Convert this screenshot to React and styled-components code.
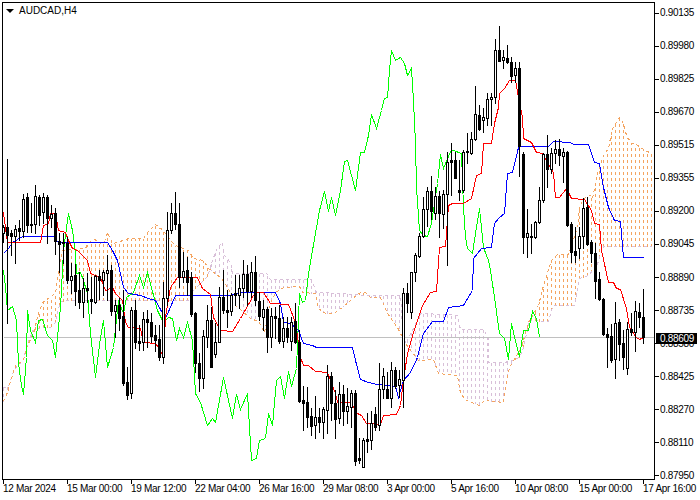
import styled, { createGlobalStyle } from "styled-components";

const GlobalStyle = createGlobalStyle`
  html, body {
    margin: 0;
    padding: 0;
    background: #fff;
  }
`;

// hi, lo, body top, body bottom, 1 = bear (filled)
const CANDLES = [
  [225,242,227,233,0],[159,323,227,235,1],[230,255,233,236,1],[225,263,229,236,0],[220,240,228,231,1],
  [194,237,199,231,0],[193,232,197,225,1],[203,232,224,225,1],[185,233,196,224,0],[195,225,197,215,1],
  [193,223,197,212,0],[195,243,197,218,1],[205,227,214,218,0],[208,254,213,241,1],[233,272,241,244,1],
  [233,263,242,243,1],[237,283,243,280,1],[263,293,276,280,0],[264,305,275,291,1],[272,308,290,302,1],
  [278,317,288,302,0],[273,302,288,290,1],[277,313,299,301,1],[275,303,276,302,0],[270,299,276,280,1],
  [270,295,272,280,0],[255,300,270,273,0],[265,315,270,311,1],[300,337,305,311,0],[298,330,305,318,1],
  [290,385,316,383,1],[367,399,382,395,1],[307,398,310,393,0],[300,348,310,342,1],[325,350,341,343,1],
  [312,350,319,342,0],[310,347,319,322,1],[313,342,322,336,1],[325,351,335,340,1],[325,360,339,357,1],
  [282,363,298,357,0],[212,305,230,298,0],[203,233,213,230,0],[192,229,213,224,1],[203,287,224,277,1],
  [252,282,271,277,0],[257,295,270,282,1],[272,316,277,314,1],[312,372,313,363,1],[353,391,363,378,1],
  [330,388,336,378,0],[305,347,320,337,0],[307,367,320,367,1],[323,357,342,354,0],[287,342,297,342,0],
  [270,313,297,310,1],[290,327,310,312,1],[293,315,295,311,0],[275,305,293,295,1],[275,308,288,295,0],
  [260,297,274,288,0],[265,305,274,291,1],[262,297,272,291,0],[256,305,272,300,1],[292,320,301,316,1],
  [300,330,309,317,0],[307,352,309,337,1],[308,347,316,337,0],[307,338,316,318,1],[305,343,318,341,1],
  [317,347,328,341,0],[317,342,328,337,1],[317,350,322,341,0],[303,343,321,342,1],[330,402,342,401,1],
  [386,430,400,403,1],[387,427,402,417,1],[408,435,416,426,1],[396,438,417,425,0],[408,432,417,422,1],
  [407,438,409,422,0],[365,433,376,410,0],[372,420,376,403,1],[390,438,403,419,1],[382,423,394,418,0],
  [385,425,394,411,1],[388,423,406,411,0],[390,427,393,407,0],[390,465,393,461,1],[438,463,458,460,1],
  [438,467,440,467,0],[413,452,439,441,1],[411,449,423,440,0],[407,430,414,427,1],[363,430,389,425,0],
  [368,398,376,389,0],[372,398,389,398,1],[362,407,370,398,0],[367,388,370,386,1],[370,397,379,385,0],
  [288,407,293,380,0],[283,312,293,303,1],[272,318,272,312,0],[253,281,255,272,0],[233,257,236,256,0],
  [197,237,209,236,0],[187,226,191,209,0],[176,219,191,211,1],[187,219,196,213,0],[191,237,196,213,1],
  [190,228,194,214,0],[152,265,162,194,0],[143,195,160,162,1],[152,178,160,178,1],[160,200,190,192,1],
  [150,192,152,190,0],[133,163,151,152,1],[132,154,139,153,0],[86,140,114,139,0],[105,130,115,129,1],
  [108,132,117,120,0],[93,125,99,118,0],[93,125,97,99,0],[39,103,50,97,0],[26,61,50,61,1],
  [50,68,57,60,0],[45,63,58,62,1],[57,82,62,76,1],[62,82,68,75,0],[62,176,68,146,1],
  [152,253,154,237,1],[209,257,233,237,0],[224,253,236,237,1],[221,238,222,237,0],[187,223,200,222,0],
  [153,202,154,200,0],[135,187,154,169,1],[148,173,153,169,0],[140,163,149,153,0],[139,165,149,155,1],
  [148,182,152,156,0],[151,226,152,225,1],[222,262,224,252,1],[227,262,251,255,1],[227,258,236,248,0],
  [198,248,208,236,0],[197,245,207,244,1],[240,262,242,253,1],[243,298,253,281,1],[272,300,279,299,1],
  [298,335,299,334,1],[328,367,334,337,1],[324,362,336,360,1],[302,378,323,359,0],[319,360,322,344,1],
  [330,369,343,357,1],[322,374,329,368,0],[313,335,329,332,1],[301,351,311,332,0],[303,327,312,317,1],
  [289,343,317,337,1],
];

const SPAN_A = [
  [3,401],[7,392],[10,381],[15,365],[23,360],[26,347],[33,333],[38,313],[42,302],[55,293],[58,270],[62,250],
  [85,248],[88,242],[95,239],[100,243],[105,240],[107,232],[112,243],[117,242],[128,238],[143,238],[147,232],
  [155,224],[163,230],[170,240],[175,245],[188,250],[193,258],[203,260],[208,268],[220,277],[228,288],[232,303],
  [240,309],[250,318],[258,321],[264,332],[270,303],[275,292],[283,287],[299,286],[302,292],[315,293],[318,308],
  [325,313],[333,313],[342,307],[352,298],[360,292],[365,292],[370,297],[380,297],[387,313],[397,327],[405,343],
  [418,360],[433,359],[438,373],[457,375],[460,393],[466,400],[479,405],[484,400],[503,402],[506,383],[509,367],
  [521,347],[528,322],[538,305],[543,285],[551,260],[557,254],[568,254],[577,227],[579,208],[583,198],[590,195],
  [592,198],[597,173],[603,155],[608,148],[611,132],[613,126],[619,117],[623,123],[626,135],[631,143],[636,144],
  [643,149],[651,153],
];

const SPAN_B = [
  [3,387],[8,386],[13,371],[17,365],[23,360],[25,350],[32,330],[42,327],[50,327],[55,322],[58,308],[60,301],
  [72,300],[188,300],[192,291],[207,276],[212,260],[217,247],[222,242],[224,255],[230,262],[232,273],[266,273],
  [270,279],[311,279],[316,292],[343,293],[366,295],[400,295],[402,330],[405,343],[412,330],[420,313],[445,314],
  [457,315],[460,329],[483,329],[488,338],[488,362],[503,362],[509,361],[519,357],[523,347],[529,320],[548,321],
  [551,310],[553,305],[574,305],[579,278],[586,276],[596,267],[599,257],[603,246],[651,246],
];

const TENKAN = [
  [3,212],[4,220],[6,235],[7,242],[40,242],[43,225],[48,223],[50,213],[55,213],[58,230],[65,232],[68,240],[72,248],
  [77,250],[87,260],[90,273],[100,277],[105,290],[112,287],[115,293],[122,300],[125,322],[128,327],[140,328],[143,342],
  [155,343],[160,350],[163,357],[165,317],[170,287],[177,277],[197,277],[202,288],[210,294],[213,317],[220,330],[232,331],
  [240,318],[253,295],[257,292],[263,292],[270,303],[288,304],[295,322],[300,357],[303,365],[308,365],[315,371],[327,372],
  [335,393],[337,402],[350,402],[357,413],[361,415],[366,423],[380,424],[383,415],[396,414],[400,405],[402,387],[407,353],
  [413,332],[422,305],[430,292],[436,291],[439,247],[445,246],[448,205],[452,203],[463,203],[471,198],[476,175],[481,173],
  [483,143],[491,143],[494,123],[498,107],[499,93],[504,88],[509,80],[515,80],[518,97],[522,117],[523,138],[531,142],
  [536,152],[542,153],[553,172],[555,197],[559,197],[566,188],[571,198],[584,199],[591,210],[594,223],[599,224],[601,250],
  [608,282],[613,282],[616,288],[620,289],[626,308],[629,327],[636,337],[639,339],[643,337],
];

const KIJUN = [
  [3,253],[8,248],[12,242],[22,236],[53,236],[58,242],[107,242],[112,250],[117,260],[123,287],[128,293],[140,295],
  [148,298],[155,300],[165,318],[175,295],[230,295],[240,292],[275,292],[280,303],[283,322],[290,323],[298,330],
  [303,343],[312,345],[316,347],[352,347],[355,360],[360,379],[368,382],[377,384],[395,386],[398,397],[403,380],
  [410,372],[417,357],[423,333],[432,321],[443,321],[448,307],[463,305],[472,290],[473,258],[481,248],[491,247],
  [494,223],[499,217],[504,213],[507,173],[512,172],[518,147],[521,146],[548,146],[553,141],[569,142],[574,144],
  [588,144],[594,162],[599,163],[603,187],[608,207],[614,220],[620,221],[623,257],[643,257],
];

const CHIKOU = [
  [3,270],[5,287],[7,310],[12,306],[16,320],[18,363],[21,385],[23,394],[26,357],[27,310],[30,330],[35,342],[38,320],
  [42,319],[47,335],[52,340],[55,357],[60,307],[63,250],[68,213],[72,230],[75,253],[76,273],[80,272],[83,280],[87,293],
  [90,333],[95,377],[100,337],[103,320],[107,367],[113,347],[118,300],[123,313],[126,297],[133,292],[139,275],[143,287],
  [147,272],[157,310],[163,322],[168,317],[172,318],[176,340],[179,328],[183,337],[187,322],[192,340],[195,393],[200,402],
  [207,425],[212,418],[215,422],[223,377],[232,418],[236,394],[240,409],[247,393],[251,460],[256,458],[259,440],[265,438],
  [268,413],[272,425],[276,380],[280,376],[284,398],[288,371],[291,386],[296,368],[299,293],[302,302],[305,300],[308,273],
  [312,250],[319,210],[324,191],[328,211],[331,197],[335,215],[340,190],[344,161],[347,160],[355,190],[360,152],[364,152],
  [368,135],[371,114],[376,128],[381,110],[384,98],[387,97],[389,70],[391,50],[395,60],[400,57],[404,63],[407,75],[411,68],
  [413,100],[415,143],[416,187],[419,230],[423,235],[427,236],[431,223],[437,183],[440,154],[443,168],[450,151],[453,150],
  [461,153],[463,207],[465,237],[467,248],[472,253],[475,233],[479,208],[483,247],[488,260],[490,270],[494,297],[499,333],
  [504,338],[508,359],[511,323],[516,345],[519,356],[523,330],[528,330],[532,311],[536,318],[539,337],
];

const PRICES = [
  "0.90135","0.89980","0.89825","0.89670","0.89515","0.89355","0.89200","0.89045",
  "0.88890","0.88735","0.88580","0.88425","0.88270","0.88110","0.87950",
];

const TIMES = [
  "12 Mar 2024","15 Mar 00:00","19 Mar 12:00","22 Mar 04:00","26 Mar 16:00","29 Mar 08:00",
  "3 Apr 00:00","5 Apr 16:00","10 Apr 08:00","15 Apr 00:00","17 Apr 16:00",
];

const Screen = styled.div`
  display: grid;
  grid-template-columns: 653px 1fr;
  grid-template-rows: 478px 1fr;
  width: 698px;
  height: 498px;
  padding: 2px 0 0 2px;
  font-family: "Liberation Sans", Arial, sans-serif;
  font-size: 10px;
  letter-spacing: -0.3px;
  color: #000;
  overflow: hidden;
`;

const Plot = styled.div`
  position: relative;
  border: 1px solid #000;
  overflow: hidden;
`;

const ChartTitle = styled.div`
  position: absolute;
  top: 2px;
  left: 3px;
  display: flex;
  align-items: center;
  gap: 5px;
  line-height: 12px;
  letter-spacing: 0;
`;

const Caret = styled.span`
  width: 0;
  height: 0;
  border-left: 4px solid transparent;
  border-right: 4px solid transparent;
  border-top: 4px solid #000;
`;

const ChartSvg = styled.svg`
  display: block;
  width: 651px;
  height: 476px;
`;

const Line = styled.polyline`
  fill: none;
  stroke: ${(p) => p.$color};
  stroke-width: 1;
  stroke-dasharray: ${(p) => (p.$dashed ? "3 3" : "none")};
  shape-rendering: crispEdges;
`;

const Hatch = styled.line`
  stroke: ${(p) => p.$color};
  stroke-width: 1;
  stroke-dasharray: 3 3;
  shape-rendering: crispEdges;
`;

const Block = styled.rect`
  fill: ${(p) => p.$color || "#000"};
  shape-rendering: crispEdges;
`;

const PriceAxis = styled.div`
  position: relative;
  display: flex;
  flex-direction: column;
  justify-content: space-between;
  height: 475px;
  margin-top: 5px;
`;

const PriceRow = styled.div`
  display: flex;
  align-items: center;
  gap: 1px;
  height: 12px;
  line-height: 12px;
  &::before {
    content: "";
    width: 4px;
    height: 1px;
    background: #000;
  }
`;

const CurrentPrice = styled.div`
  position: absolute;
  top: 326px;
  left: 1px;
  width: 41px;
  height: 11px;
  padding-left: 4px;
  box-sizing: border-box;
  background: #000;
  color: #fff;
  line-height: 11px;
`;

const TimeAxis = styled.div`
  display: flex;
  grid-column: 1 / 3;
  padding-left: 1px;
`;

const TimeCell = styled.div`
  flex: 0 0 64px;
  white-space: nowrap;
  line-height: 12px;
  &::before {
    content: "";
    display: block;
    width: 1px;
    height: 4px;
    margin-bottom: -1px;
    background: #000;
  }
`;

const toPoints = (pts) => pts.map(([x, y]) => `${x},${y}`).join(" ");

function interpolate(pts, x) {
  for (let i = 1; i < pts.length; i++) {
    if (x <= pts[i][0]) {
      const [x0, y0] = pts[i - 1];
      const [x1, y1] = pts[i];
      if (x1 === x0) return y1;
      return Math.round(y0 + ((y1 - y0) * (x - x0)) / (x1 - x0));
    }
  }
  return pts[pts.length - 1][1];
}

function Cloud() {
  const columns = [];
  for (let i = 0; i <= 162; i++) {
    const x = 3 + 4 * i;
    const a = interpolate(SPAN_A, x);
    const b = interpolate(SPAN_B, x);
    // drawn from span B towards span A, so the dashes line up along flat B stretches
    columns.push(
      <Hatch key={x} x1={x} x2={x} y1={b} y2={a} $color={a < b ? "#f4a460" : "#d8bfd8"} />
    );
  }
  return (
    <>
      {columns}
      <Line points={toPoints(SPAN_B)} $color="#d8bfd8" $dashed />
      <Line points={toPoints(SPAN_A)} $color="#f4a460" $dashed />
    </>
  );
}

function Candle({ index, data }) {
  const [hi, lo, top, bottom, bear] = data;
  const x = 3 + 4 * index;
  return (
    <>
      <Block x={x} y={hi} width={1} height={lo - hi + 1} />
      <Block x={x - 1} y={top} width={3} height={bottom - top + 1} />
      {!bear && bottom - top > 1 && (
        <Block x={x} y={top + 1} width={1} height={bottom - top - 1} $color="#fff" />
      )}
    </>
  );
}

function App() {
  return (
    <Screen>
      <GlobalStyle />
      <Plot>
        <ChartSvg viewBox="3 3 651 476">
          <g transform="translate(0.5 0.5)">
            <Cloud />
            <Line points="3,337 654,337" $color="#c0c0c0" />
            <Line points={toPoints(CHIKOU)} $color="#00ff00" />
            <Line points={toPoints(KIJUN)} $color="#0000ff" />
            <Line points={toPoints(TENKAN)} $color="#ff0000" />
          </g>
          {CANDLES.map((c, i) => (
            <Candle key={i} index={i} data={c} />
          ))}
        </ChartSvg>
        <ChartTitle>
          <Caret />
          AUDCAD,H4
        </ChartTitle>
      </Plot>
      <PriceAxis>
        {PRICES.map((p) => (
          <PriceRow key={p}>{p}</PriceRow>
        ))}
        <CurrentPrice>0.88609</CurrentPrice>
      </PriceAxis>
      <TimeAxis>
        {TIMES.map((t) => (
          <TimeCell key={t}>{t}</TimeCell>
        ))}
      </TimeAxis>
    </Screen>
  );
}

export default App;
